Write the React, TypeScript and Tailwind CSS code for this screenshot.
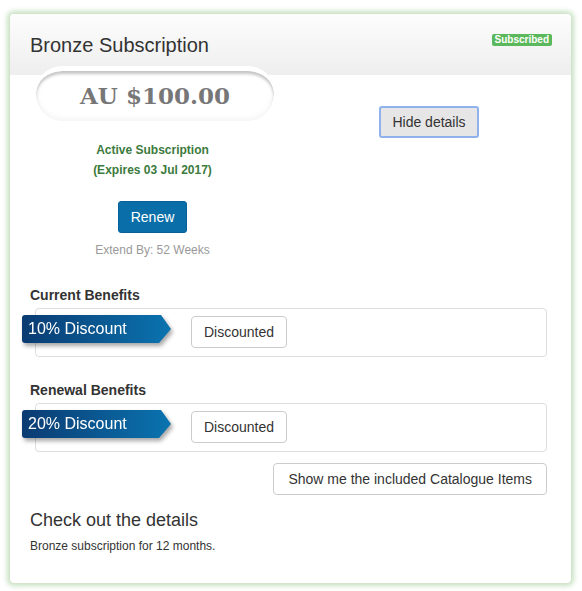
import React from 'react'

const benefitGroups = [
  { title: 'Current Benefits', discount: '10% Discount', label: 'Discounted' },
  { title: 'Renewal Benefits', discount: '20% Discount', label: 'Discounted' },
]

function Ribbon({ text }: { text: string }) {
  return (
    <div className="absolute left-[-14px] top-[6px] drop-shadow-[2px_3px_2px_rgba(0,0,0,0.35)]">
      <div
        className="h-[28px] w-[149px] rounded-l-[3px] bg-linear-to-r from-[#0a3b72] to-[#0a74b0] pl-[6px] text-[16px] leading-[28px] text-white"
        style={{ clipPath: 'polygon(0 0, 139px 0, 149px 14px, 137px 28px, 0 28px)' }}
      >
        {text}
      </div>
    </div>
  )
}

export default function App() {
  return (
    <div className="min-h-[591px] bg-white pt-[13px] px-[9px] font-['Liberation_Sans',Arial,sans-serif] text-[#333]">
      <div className="w-[563px] rounded-[5px] border border-[#d4e4cc] bg-white shadow-[0_0_5px_2px_rgba(130,190,120,0.45)] overflow-hidden">
        {/* Header */}
        <div className="flex h-[61px] items-center justify-between bg-linear-to-b from-[#fdfdfd] to-[#eeeeee] pl-5 pr-[19px]">
          <h2 className="text-[20px] leading-[24px] pt-[1px]">Bronze Subscription</h2>
          <span className="self-start mt-[20px] rounded-[2px] bg-[#5cb85c] px-[3px] text-[10px] font-bold leading-[12px] text-white">
            Subscribed
          </span>
        </div>

        {/* Body */}
        <div className="pl-5 pr-[19px] pb-[28px]">
          <div className="flex">
            <div className="flex w-[245px] flex-col items-center">
              <div className="-mt-[9px] ml-[5px] flex h-[55px] w-[240px] items-center justify-center rounded-full border-t-[5px] border-x border-white bg-white shadow-[inset_0_3px_3px_rgba(0,0,0,0.22),inset_0_-2px_6px_rgba(0,0,0,0.05)]">
                <span className="font-['DejaVu_Serif',Georgia,serif] text-[23px] font-bold text-[#777]">AU $100.00</span>
              </div>
              <div className="mt-[19px] text-center text-[12px] font-bold leading-[20px] text-[#3c7a3d]">
                <div>Active Subscription</div>
                <div>(Expires 03 Jul 2017)</div>
              </div>
              <button className="mt-[21px] h-[32px] rounded-[3px] border border-[#06609a] bg-[#0a6fa8] px-3 text-[14px] text-white">
                Renew
              </button>
              <div className="mt-2 text-[12px] leading-[18px] text-[#999]">Extend By: 52 Weeks</div>
            </div>
            <div className="flex-1 pl-[104px]">
              <button className="mt-[31px] h-[32px] w-[100px] rounded-[3px] border-2 border-[#8fb2ec] bg-[#e6e6e6] text-[14px] text-[#333]">
                Hide details
              </button>
            </div>
          </div>

          {benefitGroups.map((g, i) => (
            <div key={g.title} className={i === 0 ? 'mt-[26px]' : 'mt-[23px]'}>
              <h4 className="text-[14px] font-bold leading-[20px]">{g.title}</h4>
              <div className="relative mx-[5px] mt-[3px] flex rounded-[4px] border border-[#ddd] pl-[155px] pt-[7px] pb-[8px]">
                <Ribbon text={g.discount} />
                <button className="h-[32px] rounded-[4px] border border-[#ccc] bg-white px-3 text-[14px] text-[#333]">
                  {g.label}
                </button>
              </div>
            </div>
          ))}

          <div className="mr-[5px] mt-[11px] flex justify-end">
            <button className="h-[32px] rounded-[4px] border border-[#ccc] bg-white px-[14px] text-[14px] text-[#333]">
              Show me the included Catalogue Items
            </button>
          </div>

          <h3 className="mt-[13px] text-[18px] leading-[24px]">Check out the details</h3>
          <p className="mt-[6px] text-[12px] leading-[17px]">Bronze subscription for 12 months.</p>
        </div>
      </div>
    </div>
  )
}
